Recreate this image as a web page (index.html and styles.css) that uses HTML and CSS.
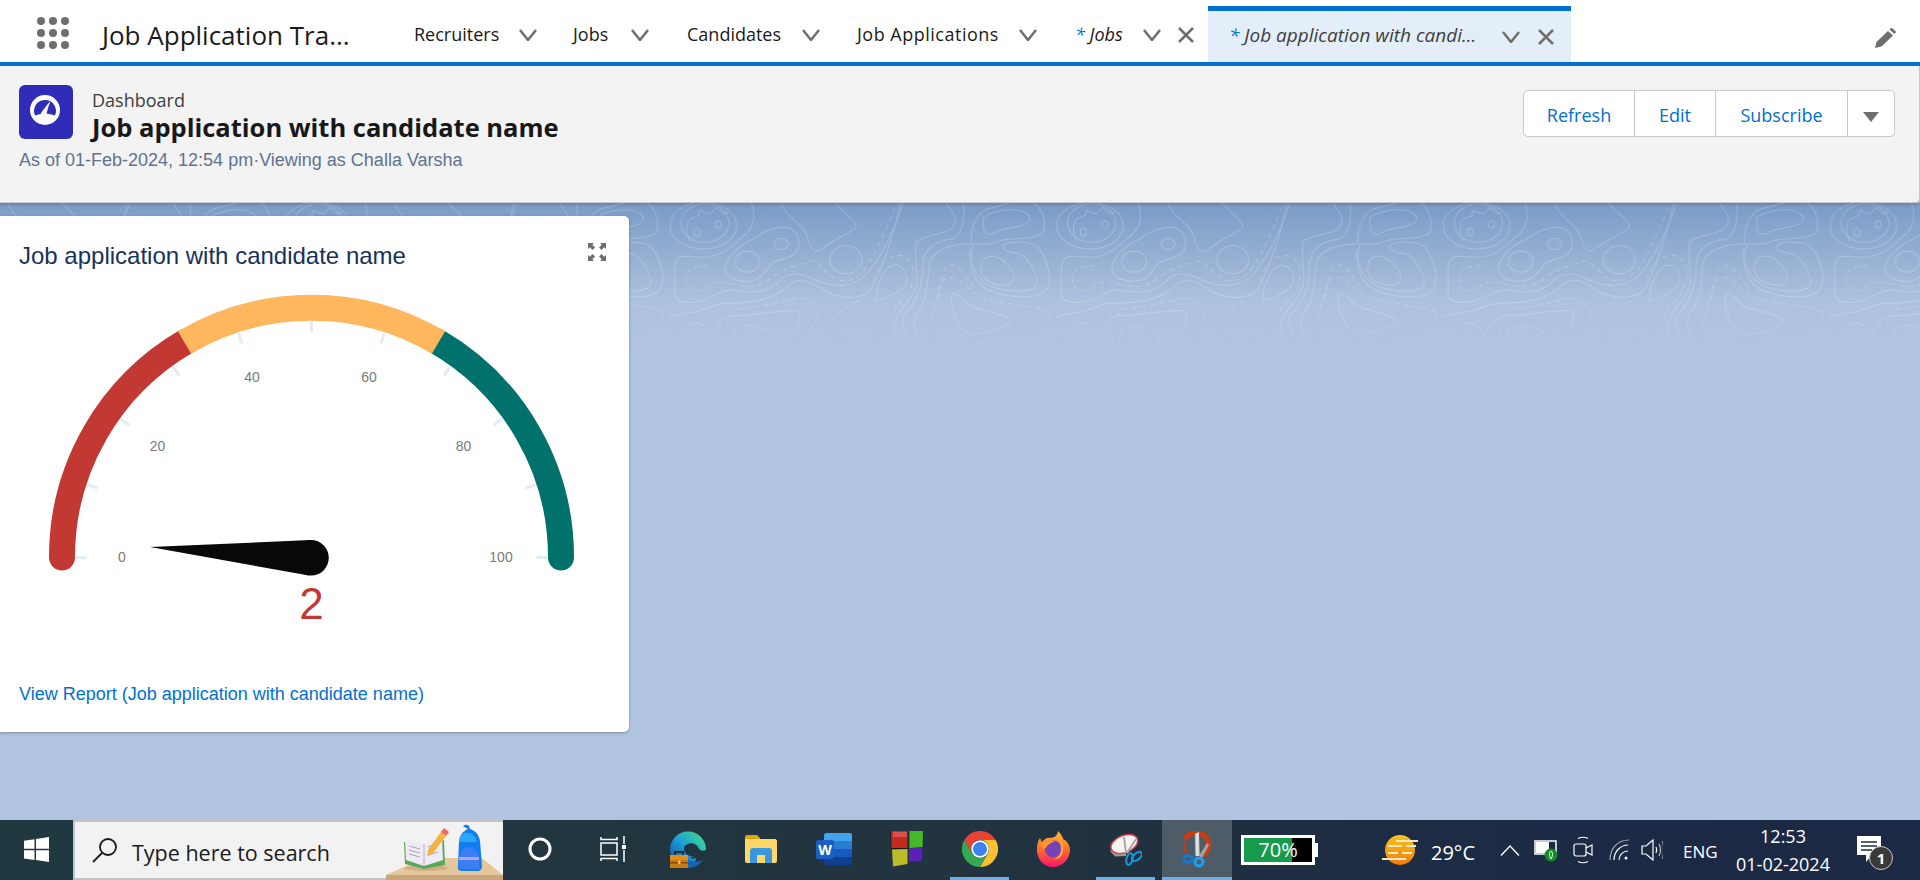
FILE: index.html
```html
<!DOCTYPE html>
<html lang="en">

<head>
    <meta charset="UTF-8">
    <title>Job application with candidate name</title>
    <link rel="stylesheet" href="styles.css">
</head>

<body>
    <div class="page">
        <!-- app tabs -->
        <nav class="topbar">
            <div class="launcher">
                <svg width="32" height="32" viewBox="0 0 32 32" fill="#706e6b">
                    <circle cx="4" cy="4" r="4" /><circle cx="16" cy="4" r="4" /><circle cx="28" cy="4" r="4" />
                    <circle cx="4" cy="16" r="4" /><circle cx="16" cy="16" r="4" /><circle cx="28" cy="16" r="4" />
                    <circle cx="4" cy="28" r="4" /><circle cx="16" cy="28" r="4" /><circle cx="28" cy="28" r="4" />
                </svg>
            </div>
            <div class="app-name">Job Application Tra...</div>
            <div class="tabs">
                <div class="tab tab-recruiters"><span>Recruiters</span><svg class="chev" viewBox="0 0 18 12"><path d="M1 1l8 10 8-10" /></svg></div>
                <div class="tab tab-jobs"><span>Jobs</span><svg class="chev" viewBox="0 0 18 12"><path d="M1 1l8 10 8-10" /></svg></div>
                <div class="tab tab-candidates"><span>Candidates</span><svg class="chev" viewBox="0 0 18 12"><path d="M1 1l8 10 8-10" /></svg></div>
                <div class="tab tab-applications"><span>Job Applications</span><svg class="chev" viewBox="0 0 18 12"><path d="M1 1l8 10 8-10" /></svg></div>
                <div class="tab tab-temp">
                    <span class="tab-italic"><b>*</b> Jobs</span>
                    <svg class="chev" viewBox="0 0 18 12"><path d="M1 1l8 10 8-10" /></svg>
                    <svg class="close" viewBox="0 0 18 16"><path d="M2 1l14 14M16 1L2 15" /></svg>
                </div>
                <div class="tab tab-active">
                    <span class="tab-italic"><b>*</b> Job application with candi...</span>
                    <svg class="chev" viewBox="0 0 18 12"><path d="M1 1l8 10 8-10" /></svg>
                    <svg class="close" viewBox="0 0 18 16"><path d="M2 1l14 14M16 1L2 15" /></svg>
                </div>
            </div>
            <svg class="pencil" width="22" height="20" viewBox="0 0 22 20" fill="#706e6b">
                <path d="M1 20l1.500-6L14 3l5 4.500L7.500 18.500z" />
                <path d="M15.500 1.500l1.200-1.200c.5-.4 1.100-.4 1.600 0l3.200 3c.4.4.4 1.100 0 1.500l-1.200 1.200z" />
            </svg>
        </nav>

        <!-- dashboard header -->
        <header class="dash-header">
            <div class="dash-title">
                <div class="dash-icon">
                    <svg width="36" height="36" viewBox="0 0 36 36">
                        <circle cx="17" cy="16" r="15" fill="#fff" />
                        <path d="M7 21.500a11 11 0 1 1 20 0c-6-2.500-14-2.500-20 0z" fill="#2f2cb7" />
                        <path d="M12.500 20.500c.5-2 3-5 9-12.500l.6.300c-2 5-3 9-3.600 12z" fill="#fff" />
                    </svg>
                </div>
                <div>
                    <div class="dash-type">Dashboard</div>
                    <h1>Job application with candidate name</h1>
                </div>
            </div>
            <div class="btn-group">
                <button class="btn btn-refresh">Refresh</button>
                <button class="btn btn-edit">Edit</button>
                <button class="btn btn-subscribe">Subscribe</button>
                <button class="btn btn-more"><svg width="16" height="10" viewBox="0 0 16 10" fill="#706e6b"><path d="M0 0h16L8 10z" /></svg></button>
            </div>
            <p class="dash-meta">As of 01-Feb-2024, 12:54 pm·Viewing as Challa Varsha</p>
        </header>

        <main class="board">
            <svg class="topo" width="1920" height="160">
                <defs>
                    <linearGradient id="topoFade" x1="0" y1="0" x2="0" y2="1">
                        <stop offset="0.65" stop-color="#fff" />
                        <stop offset="1" stop-color="#000" />
                    </linearGradient>
                    <mask id="topoMask">
                        <rect width="1920" height="160" fill="url(#topoFade)" />
                    </mask>
                    <pattern id="topoTile" patternUnits="userSpaceOnUse" x="669.330" y="0" width="386.670" height="160" viewBox="88 12 1160 480">
                        <g fill="none" stroke="#fff" stroke-width="3">
                            <ellipse cx="190" cy="80" rx="100" ry="70" />
                            <ellipse cx="195" cy="72" rx="72" ry="58" />
                            <ellipse cx="170" cy="100" rx="9" ry="12" />
                            <ellipse cx="234" cy="76" rx="9" ry="11" />
                            <ellipse cx="322" cy="188" rx="37" ry="32" />
                            <ellipse cx="424" cy="135" rx="21" ry="17" />
                            <ellipse cx="618" cy="182" rx="48" ry="42" />
                            <path d="M150 125C135 100 140 70 150 60l25-10 5-15 30 10 20-20 20 20 15-5" />
                            <path d="M335 12c15 48 5 78-35 108-30 30-70 55-110 55l-60-3c-20 0-26 18-26 48v60c0 25 21 32 56 30 50-5 80-38 115-38 45 8 105 18 145-27 20-25 60-27 100-5 50 25 120 30 160-15 40-45 80-125 110-213" />
                            <path d="M255 205c5-35 55-75 85-85 40-30 70-35 100-35 30 5 40 35 35 60-5 30-55 35-75 45-20 15-30 55-80 57-40 0-65-17-65-42z" />
                            <path d="M425 12c5 38 65 58 80 108 10 45 25 45 55 20 30-25 80-40 88-55 2-20-28-35-63-73" />
                            <path d="M707 305c3-45 23-105 58-107 35 2 45 52 25 67-20 20-60 35-83 40z" />
                            <path d="M85 360c0-15 55-15 95-25 40-15 60-25 110-23 50-2 110-12 150-47 40-45 90-5 120 15 60 25 120 20 140-20 20-50 60-130 80-248" />
                            <path d="M110 430c10-40 40-60 65-58 25 3 30 38 40 33 20-35 40-60 75-55 50 0 140-20 180-15 20 10 10 50-15 75-15 20-25 50-35 65" />
                            <path d="M275 470c5-70 5-90 45-90 30 0 80 15 80 30l-5 60" />
                            <path d="M825 130c35-30 115-20 120-60 5-30-20-40-25-58" />
                            <path d="M830 130c-10 40 5 90 0 130-15 50-60 70-68 120-2 40 28 70 43 100" />
                            <path d="M970 12c5 48 0 88-30 108-60 5-90 30-92 80 2 60-18 110-58 150-10 40 30 90 50 130" />
                            <path d="M870 480c-40-60-60-90-40-140 40-40 30-110 40-150 10-40 70-55 120-55" />
                            <path d="M1000 135c-20 65 0 125 60 145 70 20 140 20 160-10 20-30 0-100-30-130-30-15-90-15-100 0-5 15 20 20 50 25 30 15 60 75 50 95-20 25-90 20-140 0-40-20-65-70-60-110" />
                            <path d="M1030 55c40-25 120-35 140 0 5 30-70 30-95 40-25 20-45 10-45-15z" />
                            <path d="M1025 190c15-30 55-20 75 5 30 30 30 55 0 63-30 2-70-8-78-43z" />
                            <path d="M935 285c25-5 35 25 65 40 50 15 110 25 110 45-20 20-90 40-120 35-40-15-60-85-55-120z" />
                            <path d="M995 135c-5-35 5-85 45-105l70-18M1180 12c30 18 40 58 30 88-30 25-90 15-130 25-20 15-60 10-85 10" />
                            <path d="M470 480c20-30 50-60 70-60 30 5 60 40 70 60M665 480c5-30 35-30 55 0M108 430c0 30 12 50 22 50" />
                        </g>
                        <g fill="none" stroke="#fff" stroke-width="3" stroke-dasharray="16 12">
                            <path d="M205 200c-35 0-68 5-68 40 0 30 28 45 53 30 25-20 45-25 70-20 40 12 90 25 130-10 40-35 100-45 130-55 30 15 50 65 100 60 45-5 80-55 150-233" />
                            <path d="M258 465c-3-65 2-125 42-137 50-3 120-18 170-32 50 4 70 44 60 64-20 40-50 60-80 100" />
                            <path d="M640 445c-40-5-70-45-65-70 5-30 55-55 85-75M640 445c50-15 90-45 130-125 20-20 50-40 50-100 0-30-20-55-50-50-30 5-50 20-70 70" />
                            <path d="M870 440c-10-90 30-160 35-190 15-30 55-10 95 30 50 40 150 30 232 60-2 30-62 60-132 70-70 10-140 30-160 40" />
                            <path d="M895 300c5-60 15-100 40-102 25 2 45 42 75 72" />
                        </g>
                    </pattern>
                </defs>
                <rect width="1920" height="160" fill="url(#topoTile)" mask="url(#topoMask)" opacity="0.22" />
            </svg>

            <section class="card">
                <div class="card-head">
                    <h2>Job application with candidate name</h2>
                    <svg class="expand" width="18" height="18" viewBox="0 0 18 18" fill="#706e6b">
                        <path d="M0 0h6L4.300 1.700 7 4.500 4.500 7 1.700 4.300 0 6zM18 0v6l-1.700-1.700L13.500 7 11 4.500l2.700-2.800L12 0zM0 18v-6l1.700 1.700L4.500 11 7 13.500l-2.700 2.800L6 18zM18 18h-6l1.700-1.700L11 13.500l2.500-2.500 2.800 2.700L18 12z" />
                    </svg>
                </div>
                <svg class="gauge" width="629" height="350" viewBox="0 280 629 350">
                    <path class="ticks" d="M75.500 557.500H86.500M87.100 484.600L97.500 488M120.600 418.800L129.500 425.200M172.800 366.600L179.200 375.500M238.600 333.100L242 343.500M311.500 321.500V332.500M384.400 333.100L381 343.500M450.200 366.600L443.800 375.500M502.400 418.800L493.500 425.200M535.900 484.600L525.500 488M547.500 557.500H536.500" />
                    <path class="arc arc-red" d="M62 557.500A249.500 249.500 0 0 1 186 341.500" />
                    <path class="arc arc-green" d="M437 341.500A249.500 249.500 0 0 1 561 557.500" />
                    <path class="arc arc-yellow" d="M184.500 342.500A249.500 249.500 0 0 1 438.500 342.500" />
                    <text class="tick-label" x="122" y="562">0</text>
                    <text class="tick-label" x="157.500" y="451">20</text>
                    <text class="tick-label" x="252" y="382">40</text>
                    <text class="tick-label" x="369" y="382">60</text>
                    <text class="tick-label" x="463.500" y="451">80</text>
                    <text class="tick-label" x="501" y="562">100</text>
                    <path d="M311 540L150 547 309 575.500z" fill="#080808" />
                    <circle cx="311" cy="557.800" r="17.800" fill="#080808" />
                    <text class="gauge-value" x="311.500" y="618.500">2</text>
                </svg>
                <a class="report-link" href="#">View Report (Job application with candidate name)</a>
            </section>
        </main>

        <!-- windows taskbar -->
        <footer class="taskbar">
            <div class="start">
                <svg width="25" height="25" viewBox="0 0 25 25" fill="#fff">
                    <path d="M0 3.700l10.500-1.500v9.600H0zM12 2L25 0v11.800H12zM0 13.300h10.500v9.600L0 21.400zM12 13.300h13V25l-13-2z" />
                </svg>
            </div>
            <div class="search">
                <svg class="search-glass" width="26" height="26" viewBox="0 0 26 26" fill="none" stroke="#1a1a1a" stroke-width="1.800">
                    <circle cx="16" cy="10" r="8" /><path d="M10 16L1 25" />
                </svg>
                <span class="search-text">Type here to search</span>
                <svg class="search-art" width="117" height="56" viewBox="0 0 117 56">
                    <path d="M38 34h58l21 17H0z" fill="#e6c79c" />
                    <path d="M0 51h117v5H0z" fill="#c8a67c" />
                    <ellipse cx="40" cy="44" rx="22" ry="3" fill="#cfae84" />
                    <path d="M18 18l20 5 20-7 1 25-21 4-19-5z" fill="#57a85a" />
                    <path d="M19 15l19 5 18-8 1 24-19 6-18-6z" fill="#efeaf5" />
                    <path d="M38 20v22" stroke="#b8b0c8" fill="none" />
                    <path d="M23 22l11 3M23 26l11 3M23 30l11 3M42 23l5-2M42 27l9-3M42 31l10-3" stroke="#a8a4b4" fill="none" />
                    <path d="M42 26l13-18 5 4-13 17-6 3z" fill="#f3b33d" />
                    <path d="M55 8l3-4 5 4-3 4z" fill="#ef6a5c" />
                    <path d="M77 2a4 4 0 0 1 6 0l1 3c6 2 9 6 10 12l2 25c0 3-2 5-4 5H76c-3 0-5-2-4-5l1-25c1-6 4-10 9-12z" fill="#0f7ff0" />
                    <path d="M79 9h3c5 0 8 4 9 9H73c0-5 2-8 6-9z" fill="#2aa6fb" />
                    <path d="M73 36c0-8 4-13 10-13s10 5 10 13v9H73z" fill="#3d7df3" />
                    <path d="M73 33h20v3H73z" fill="#b9a0f5" />
                </svg>
            </div>
            <div class="task-util">
                <svg width="24" height="24" viewBox="0 0 24 24" fill="none" stroke="#fff" stroke-width="3"><circle cx="12" cy="12" r="10" /></svg>
            </div>
            <div class="task-util">
                <svg width="26" height="26" viewBox="0 0 26 26" fill="none" stroke="#fff" stroke-width="1.500">
                    <path d="M1 1v2.500h16V1M1 7h16v12H1zM1 25v-2.500h16V25M24 0v8M24 14v12" />
                    <rect x="22" y="9" width="4" height="4" fill="#fff" stroke="none" />
                </svg>
            </div>

            <div class="task-apps">
                <div class="task-app">
                    <svg width="36" height="37" viewBox="0 0 36 37">
                        <defs>
                            <linearGradient id="edgeFill" x1="0" y1="1" x2="1" y2="0">
                                <stop offset="0.2" stop-color="#1565b8" />
                                <stop offset="0.5" stop-color="#1f9ed6" />
                                <stop offset="0.75" stop-color="#2fc3ae" />
                                <stop offset="1" stop-color="#6bd45e" />
                            </linearGradient>
                        </defs>
                        <circle cx="18" cy="18.500" r="18" fill="url(#edgeFill)" />
                        <path d="M37 22c-4 4-11 5-17 3-6-2-8-8-4-11 4-3 10-2 12 2 1 3 4 5 9 3v10L28 37H18c5-3 8-7 8-10-2 1-4 1-6 0z" fill="#20353f" />
                        <path d="M18 37c6 0 11-3 15-8-5 2-11 2-15 0z" fill="#1565b8" />
                        <path d="M0 24h18v13H0z" fill="#c97a10" />
                        <path d="M0 24h18v5H0z" fill="#e08f1a" />
                        <path d="M5 24v-3h8v3" fill="none" stroke="#33261a" stroke-width="2" />
                        <path d="M0 31h18v1.500H0z" fill="#8a4b05" />
                        <path d="M8 29.500h2.500v3.500H8z" fill="#f6c15c" />
                    </svg>
                </div>
                <div class="task-app">
                    <svg width="32" height="28" viewBox="0 0 32 28">
                        <path d="M0 2c0-1 1-2 2-2h10l3 3v3H0z" fill="#e3a50a" />
                        <path d="M0 4h30c1 0 2 1 2 2v20c0 1-1 2-2 2H2c-1 0-2-1-2-2z" fill="#fdd868" />
                        <path d="M5 28V16c0-2 1-3 3-3h16c2 0 3 1 3 3v12h-7v-8h-8v8z" fill="#3a96dd" />
                    </svg>
                </div>
                <div class="task-app">
                    <svg width="36" height="32" viewBox="0 0 36 32">
                        <path d="M8 2c0-1 1-2 2-2h24c1 0 2 1 2 2v6H8z" fill="#41a5ee" />
                        <path d="M8 8h28v8H8z" fill="#2b7cd3" />
                        <path d="M8 16h28v8H8z" fill="#185abd" />
                        <path d="M8 24h28v6c0 1-1 2-2 2H10c-1 0-2-1-2-2z" fill="#103f91" />
                        <rect y="7" width="18" height="19" rx="2" fill="#1b5ec4" />
                        <text class="word-w" x="9" y="22">W</text>
                    </svg>
                </div>
                <div class="task-app">
                    <svg width="34" height="36" viewBox="0 0 34 36">
                        <path d="M0 0h18v18H1z" fill="#1a1a1a" />
                        <path d="M1 0h16.500v17H1.500z" fill="#c22a1c" />
                        <path d="M3 1h14v5H3z" fill="#d9534a" />
                        <path d="M19.500 0H33l-.5 16-13 1z" fill="#46b92a" />
                        <path d="M2 18.500l15.500-.5v15L3 35.500z" fill="#bdbb2a" />
                        <path d="M19 17.500l13.500-1-.5 13-13 1.500z" fill="#5a1fb5" />
                    </svg>
                </div>
                <div class="task-app">
                    <svg width="36" height="36" viewBox="0 0 36 36">
                        <path d="M33.600 9A18 18 0 0 0 2.400 9l7.800 13.500A9 9 0 0 1 18 9z" fill="#ea4335" />
                        <path d="M33.600 9A18 18 0 0 1 18 36l7.800-13.500A9 9 0 0 0 18 9z" fill="#fbc02d" />
                        <path d="M18 36A18 18 0 0 1 2.400 9l7.800 13.500a9 9 0 0 0 15.600 0z" fill="#34a853" />
                        <circle cx="18" cy="18" r="8.800" fill="#fff" />
                        <circle cx="18" cy="18" r="7" fill="#3b82f0" />
                    </svg>
                </div>
                <div class="task-app">
                    <svg width="34" height="36" viewBox="0 0 34 36">
                        <defs>
                            <linearGradient id="foxFill" x1="0" y1="0" x2="0" y2="1">
                                <stop offset="0" stop-color="#ffbd2e" />
                                <stop offset="0.5" stop-color="#ff6f2e" />
                                <stop offset="1" stop-color="#f5156c" />
                            </linearGradient>
                        </defs>
                        <path d="M1 17c0-4 1-7 3-10 1 2 1 3 2 4 2-3 6-5 9-4 5-1 7-4 7-7 3 3 5 6 5 8 4 2 7 6 7 11 0 9-8 17-17 17S0 28 1 17z" fill="url(#foxFill)" />
                        <circle cx="17.300" cy="18" r="8.500" fill="#7542b8" />
                        <path d="M5 14c3-5 9-5 14-4-4 2-7 3-10 8-2-1-3-3-4-4z" fill="#ff9a2e" />
                        <path d="M22 4c3 4 6 10 5 16-1 6-5 9-9 8 5-2 7-6 7-10 0-5-2-10-3-14z" fill="#ffa92e" />
                    </svg>
                </div>
                <div class="task-app task-app-open">
                    <svg width="33" height="34" viewBox="0 0 33 34">
                        <path d="M1 19l5-2 11 4v3l-11 .5z" fill="#9a9a9a" />
                        <ellipse cx="15.300" cy="12" rx="14" ry="8.500" transform="rotate(-22 15.300 12)" fill="#f7f4f4" stroke="#d8404a" stroke-width="1.500" />
                        <path d="M15 5l2 16M27 7L18 21" stroke="#a9a9a9" fill="none" stroke-width="2" />
                        <ellipse cx="20.500" cy="27" rx="3" ry="6" transform="rotate(15 20.500 27)" fill="none" stroke="#1b92d1" stroke-width="2.200" />
                        <ellipse cx="28" cy="24.500" rx="3.200" ry="6" transform="rotate(50 28 24.500)" fill="none" stroke="#1b92d1" stroke-width="2.200" />
                    </svg>
                </div>
                <div class="task-app task-app-active">
                    <svg width="30" height="37" viewBox="0 0 30 37">
                        <defs>
                            <linearGradient id="bladeFill" x1="0" y1="0" x2="1" y2="0">
                                <stop offset="0" stop-color="#8f959a" />
                                <stop offset="0.5" stop-color="#f0f2f3" />
                                <stop offset="1" stop-color="#aeb3b8" />
                            </linearGradient>
                        </defs>
                        <path d="M3 8C6 2 14 0 20 3c6 3 8 11 5 17-1 2-2 3-4 4" fill="none" stroke="#d13a0d" stroke-width="5" />
                        <path d="M4 10c-2 5-1 10 2 14" fill="none" stroke="#d13a0d" stroke-width="2" />
                        <path d="M25 12l2 2-7 13-3-2z" fill="#9ea3a8" />
                        <path d="M12.500 3L17 1l.8 24h-4.500z" fill="url(#bladeFill)" />
                        <ellipse cx="6" cy="28" rx="4.500" ry="3.300" fill="none" stroke="#1677d2" stroke-width="3" />
                        <circle cx="17" cy="31" r="4" fill="none" stroke="#1ea0f0" stroke-width="3" />
                    </svg>
                </div>
            </div>

            <div class="battery-widget">
                <div class="battery-cell">
                    <div class="battery-level"></div>
                    <span>70%</span>
                </div>
                <div class="battery-tip"></div>
            </div>

            <div class="tray">
                <svg class="tray-sun" width="36" height="30" viewBox="0 0 36 30">
                    <defs>
                        <linearGradient id="sunFill" x1="0" y1="0" x2="0" y2="1">
                            <stop offset="0" stop-color="#fcc21b" />
                            <stop offset="1" stop-color="#ee7d0c" />
                        </linearGradient>
                    </defs>
                    <circle cx="18" cy="15" r="15" fill="url(#sunFill)" />
                    <path d="M14 6h22M6 11h14M24 11h10M6 18h10M20 18h10M0 24h24" stroke="#f7e7c6" stroke-width="2.200" />
                </svg>
                <span class="tray-temp">29°C</span>
                <svg class="tray-chevron" width="20" height="11" viewBox="0 0 20 11" fill="none" stroke="#fff" stroke-width="1.300"><path d="M1 10.500L10 1l9 9.500" /></svg>
                <svg class="tray-power" width="24" height="24" viewBox="0 0 24 24">
                    <path d="M1 3h21v13H1z" fill="none" stroke="#fff" stroke-width="1.500" />
                    <path d="M2 4h13v11H2z" fill="#fff" />
                    <circle cx="17" cy="17" r="6.500" fill="#118c27" />
                    <path d="M17 13c-2 1-2 5 0 8 2-3 2-7 0-8z" fill="none" stroke="#fff" />
                </svg>
                <svg class="tray-camera" width="20" height="28" viewBox="0 0 20 28" fill="none" stroke="#fff" stroke-width="1.200">
                    <rect x="1" y="8" width="12" height="12" rx="2" />
                    <path d="M13 12l6-3v10l-6-3M5 2.500c3-1.500 7-1.500 10 0M5 25.500c3 1.500 7 1.500 10 0" />
                </svg>
                <svg class="tray-wifi" width="22" height="22" viewBox="0 0 22 22" fill="none" stroke="#fff" stroke-width="1.200">
                    <path d="M1 21C1 10 8 1 20 1" opacity="0.6" />
                    <path d="M5 21c0-8 6-15 14-15" />
                    <path d="M10 21c0-5 4-9 9-9" />
                    <circle cx="17" cy="19" r="1.500" fill="#fff" stroke="none" />
                </svg>
                <svg class="tray-speaker" width="22" height="22" viewBox="0 0 22 22" fill="none" stroke="#fff" stroke-width="1.200">
                    <path d="M1 7h4l7-6v20l-7-6H1z" />
                    <path d="M15 8c1 2 1 4 0 6" />
                    <path d="M18 5c2 4 2 8 0 12" opacity="0.7" />
                    <path d="M21 2c2 6 2 12 0 18" opacity="0.4" />
                </svg>
                <span class="tray-lang">ENG</span>
                <div class="tray-clock">
                    <span>12:53</span>
                    <span>01-02-2024</span>
                </div>
                <div class="tray-notify">
                    <svg width="24" height="28" viewBox="0 0 24 28">
                        <path d="M0 0h24v19H15l-6 7v-7H0z" fill="#fff" />
                        <path d="M4 6h16M4 10h16M4 14h11" stroke="#22303f" stroke-width="1.300" />
                    </svg>
                    <span class="notify-badge">1</span>
                </div>
            </div>
        </footer>
    </div>
</body>

</html>
```

FILE: styles.css
```css
* {
    box-sizing: border-box;
    margin: 0;
    padding: 0;
}

body {
    font-family: "Open Sans", sans-serif;
    background-color: #b0c4df;
    overflow: hidden;
}

.page {
    width: 1920px;
    height: 880px;
    display: flex;
    flex-direction: column;
}

/* top tabs */
.topbar {
    height: 66px;
    flex-shrink: 0;
    background-color: white;
    border-bottom: 4px solid #0070d2;
    display: flex;
    align-items: stretch;
    position: relative;
    z-index: 2;
}

.launcher {
    width: 102px;
    padding: 17px 0 0 37px;
}

.app-name {
    width: 312px;
    font-size: 26px;
    line-height: 70px;
    color: #1a1a1a;
    white-space: nowrap;
}

.tabs {
    display: flex;
    align-items: stretch;
}

.tab {
    display: flex;
    align-items: center;
    font-size: 18px;
    color: #1a1a1a;
    padding-top: 5px;
}

.tab svg {
    fill: none;
    stroke: #706e6b;
    stroke-width: 2.500;
    margin-top: 2px;
}

.chev {
    width: 18px;
    height: 12px;
}

.close {
    width: 18px;
    height: 16px;
}

.tab-recruiters span { width: 105px; }
.tab-recruiters { width: 159px; }

.tab-jobs span { width: 58px; }
.tab-jobs { width: 114px; }

.tab-candidates span { width: 115px; }
.tab-candidates { width: 170px; }

.tab-applications span {
    width: 162px;
    letter-spacing: 0.5px;
    white-space: nowrap;
}
.tab-applications { width: 218px; }

.tab-temp { width: 133px; }
.tab-temp span { width: 68px; }
.tab-temp .close { margin-left: 16px; }

.tab-italic {
    font-style: italic;
    white-space: nowrap;
}

.tab-italic b {
    font-weight: 400;
    color: #0070d2;
}

.tab-active {
    width: 363px;
    margin-top: 6px;
    border-top: 5px solid #0070d2;
    background-color: #e4eef9;
    padding: 0 0 4px 21px;
    font-size: 19px;
}

.tab-active span {
    width: 273px;
    color: #3e3e3c;
}

.tab-active svg {
    margin-top: 4px;
}

.tab-active .close { margin-left: 17px; }

.pencil {
    position: absolute;
    right: 24px;
    top: 28px;
}

/* dashboard header */
.dash-header {
    height: 137px;
    flex-shrink: 0;
    background-color: #f3f3f3;
    border-right: 1px solid #c9c9c9;
    border-bottom: 1px solid #c9c9c9;
    border-bottom-right-radius: 4px;
    padding: 19px 24px 0 19px;
    display: grid;
    grid-template-columns: 1fr auto;
    align-content: start;
    position: relative;
    z-index: 1;
    box-shadow: 0 2px 3px rgba(0, 0, 0, 0.15);
}

.dash-title {
    display: flex;
    gap: 19px;
}

.dash-icon {
    width: 54px;
    height: 54px;
    background-color: #2f2cb7;
    border-radius: 6px;
    display: flex;
    align-items: center;
    justify-content: center;
}

.dash-type {
    font-size: 18px;
    line-height: 24px;
    margin-top: 3px;
    color: #3e3e3c;
}

h1 {
    font-size: 25.500px;
    line-height: 30px;
    font-weight: 700;
    color: #181818;
    white-space: nowrap;
}

.dash-meta {
    grid-column: 1 / -1;
    font-family: "Liberation Sans", sans-serif;
    font-size: 18px;
    line-height: 22px;
    margin-top: 7px;
    color: #5f7291;
}

.btn-group {
    display: flex;
    height: 47px;
    margin-top: 5px;
    background-color: white;
    border: 1px solid #c9c9c9;
    border-radius: 5px;
}

.btn {
    font-family: "Open Sans", sans-serif;
    font-size: 18px;
    color: #0070d2;
    background: none;
    border: none;
    border-right: 1px solid #c9c9c9;
    padding-top: 2px;
}

.btn-refresh { width: 111px; }
.btn-edit { width: 81px; }
.btn-subscribe { width: 132px; }
.btn-more {
    width: 46px;
    border-right: none;
}

/* dashboard body */
.board {
    flex: 1;
    padding-top: 13px;
    position: relative;
    background: linear-gradient(#7a9bc6 0, #aec2de 100px, #b0c4df 150px);
}

.topo {
    position: absolute;
    left: 0;
    top: 0;
}

.card {
    width: 629px;
    height: 516px;
    background-color: white;
    border-radius: 0 5px 5px 0;
    box-shadow: 0 1px 3px rgba(0, 0, 0, 0.3);
    position: relative;
}

.card-head {
    height: 64px;
    display: flex;
    justify-content: space-between;
    padding: 27px 23px 0 19px;
}

h2 {
    font-family: "Liberation Sans", sans-serif;
    font-size: 24px;
    line-height: 26px;
    font-weight: 400;
    color: #16325c;
}

.gauge {
    display: block;
}

.ticks {
    fill: none;
    stroke: #e4ebf2;
    stroke-width: 3;
}

.arc {
    fill: none;
    stroke-width: 26;
    stroke-linecap: round;
}

.arc-red { stroke: #c23934; }
.arc-green { stroke: #00716b; }
.arc-yellow {
    stroke: #ffb75d;
    stroke-linecap: butt;
}

.tick-label {
    font-family: "Liberation Sans", sans-serif;
    font-size: 14px;
    fill: #7a7a7a;
    text-anchor: middle;
}

.gauge-value {
    font-family: "Liberation Sans", sans-serif;
    font-size: 44px;
    fill: #c23934;
    text-anchor: middle;
}

.report-link {
    display: block;
    font-family: "Liberation Sans", sans-serif;
    font-size: 18px;
    line-height: 22px;
    color: #0070d2;
    text-decoration: none;
    margin: 53px 0 0 19px;
}

/* taskbar */
.taskbar {
    height: 60px;
    flex-shrink: 0;
    background: linear-gradient(90deg, #20393f 0%, #22343f 50%, #1c2a45 80%, #1b2944 100%);
    display: flex;
    color: white;
    position: relative;
    z-index: 3;
}

.start {
    width: 73px;
    display: flex;
    align-items: center;
    justify-content: center;
    padding-bottom: 2px;
}

.search {
    width: 430px;
    background-color: #f2f2f2;
    border: 2px solid #c4c4c4;
    border-right: none;
    display: flex;
    align-items: center;
    position: relative;
    color: #1a1a1a;
    font-size: 21.500px;
    padding-left: 17px;
}

.search-glass {
    margin-right: 14px;
}

.search-text {
    padding-top: 5px;
}

.search-art {
    position: absolute;
    right: 0;
    bottom: -2px;
}

.task-util {
    width: 73px;
    display: flex;
    align-items: center;
    justify-content: center;
    padding-bottom: 2px;
}

.task-apps {
    display: flex;
    margin-left: 2px;
}

.task-app {
    width: 73px;
    display: flex;
    align-items: center;
    justify-content: center;
    padding-bottom: 2px;
    position: relative;
}

.task-app-open::after,
.task-app-active::after,
.task-app:nth-child(5)::after {
    content: "";
    position: absolute;
    left: 7px;
    right: 7px;
    bottom: 0;
    height: 3px;
    background-color: #6cb0ea;
}

.task-app-active {
    width: 70px;
    background-color: #4e5c68;
}

.task-app-active::after {
    left: 0;
    right: 0;
}

.battery-widget {
    display: flex;
    align-items: center;
    margin-left: 9px;
}

.battery-cell {
    width: 74px;
    height: 30px;
    border: 3px solid white;
    background-color: black;
    position: relative;
    font-size: 20px;
    line-height: 24px;
    text-align: center;
    overflow: hidden;
}

.battery-level {
    position: absolute;
    left: 0;
    top: 0;
    bottom: 0;
    width: 70%;
    background-color: #179a4b;
}

.battery-cell span {
    position: relative;
}

.battery-tip {
    width: 3px;
    height: 14px;
    background-color: white;
}

.tray {
    display: flex;
    align-items: center;
}

.tray-sun { margin-left: 64px; }

.tray-temp {
    width: 43px;
    margin: 4px 0 0 13px;
    font-size: 20px;
    white-space: nowrap;
}

.tray-chevron { margin-left: 26px; }
.tray-power { margin-left: 14px; }
.tray-camera { margin-left: 15px; }
.tray-wifi { margin-left: 16px; }
.tray-speaker { margin-left: 10px; }

.tray-lang {
    width: 33px;
    margin: 2px 0 0 20px;
    font-size: 17px;
    white-space: nowrap;
}

.tray-clock {
    width: 94px;
    margin-left: 20px;
    display: flex;
    flex-direction: column;
    align-items: center;
    gap: 6px;
    font-size: 18px;
    line-height: 22px;
    white-space: nowrap;
}

.tray-notify {
    width: 24px;
    height: 28px;
    margin-left: 27px;
    position: relative;
}

.notify-badge {
    position: absolute;
    left: 12px;
    top: 10px;
    width: 24px;
    height: 24px;
    border-radius: 50%;
    border: 1px solid #c8c8c8;
    background-color: #3a3a3a;
    font-size: 15px;
    font-weight: 700;
    line-height: 22px;
    text-align: center;
}

.word-w {
    font-family: "Open Sans", sans-serif;
    font-size: 14px;
    font-weight: 700;
    fill: white;
    text-anchor: middle;
}
```
